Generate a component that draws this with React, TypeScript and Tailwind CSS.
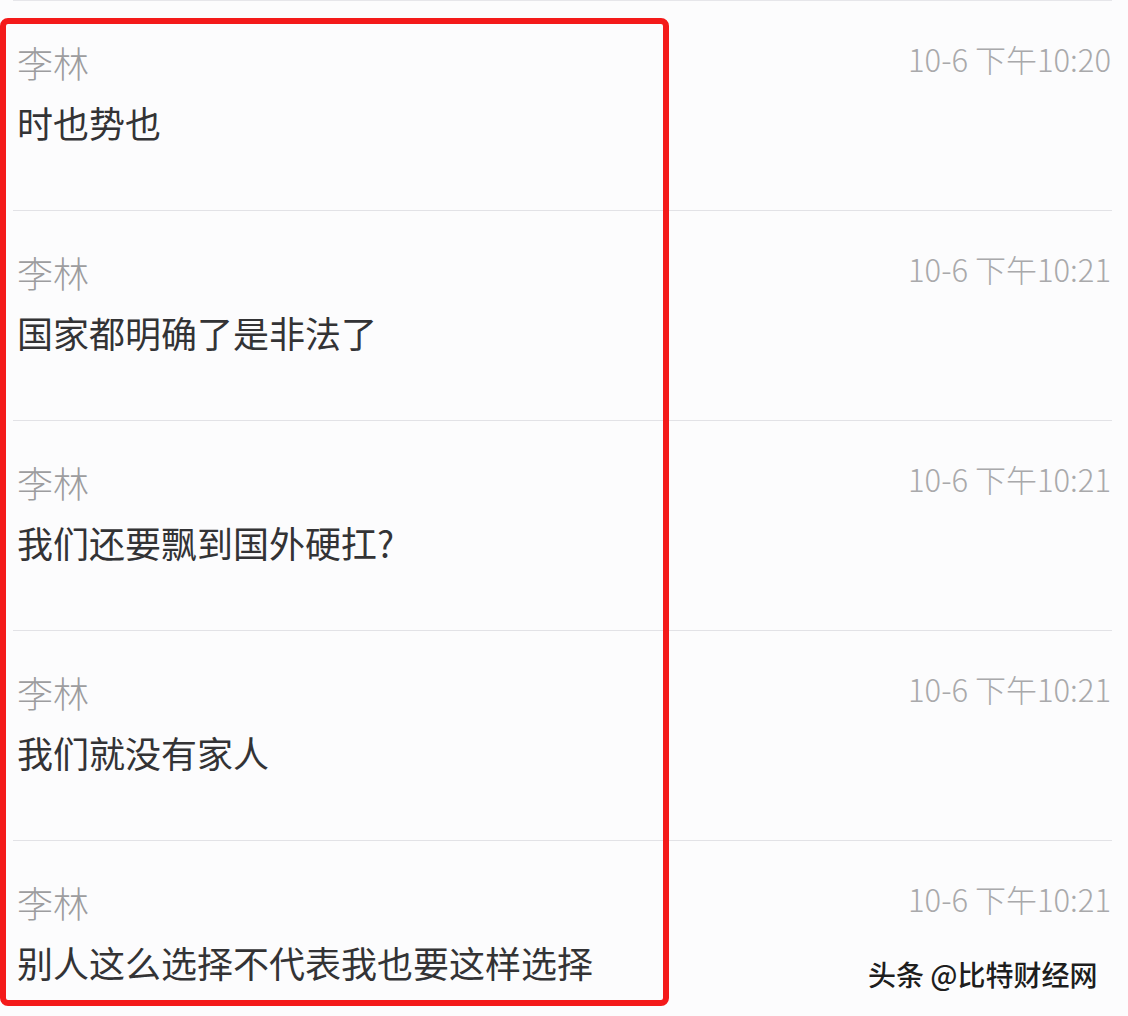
import React from "react";

const messages = [
  { name: "李林", time: "10-6 下午10:20", text: "时也势也" },
  { name: "李林", time: "10-6 下午10:21", text: "国家都明确了是非法了" },
  { name: "李林", time: "10-6 下午10:21", text: "我们还要飘到国外硬扛?" },
  { name: "李林", time: "10-6 下午10:21", text: "我们就没有家人" },
  { name: "李林", time: "10-6 下午10:21", text: "别人这么选择不代表我也要这样选择" },
];

const font = { fontFamily: '"Noto Sans CJK SC", "Noto Sans", sans-serif' };

const MessageRow = ({ name, time, text }: { name: string; time: string; text: string }) => {
  return (
    <div className="h-[210px] border-b border-[#e2e2e6] pl-[4px] pr-[1px] flex flex-col">
      <div className="flex justify-between items-start pt-[36px]">
        <span className="text-[36px] leading-[50px] text-[#9d9d9f] font-light">{name}</span>
        <span className="text-[31px] leading-[44px] text-[#a9a9ab] font-light">{time}</span>
      </div>
      <p className="text-[36px] leading-[50px] text-[#333335] mt-[10px]">{text}</p>
    </div>
  );
};

export default function App() {
  return (
    <div className="relative w-[1128px] h-[1016px] overflow-hidden bg-[#fcfcfd]" style={font}>
      <div className="pl-[13px] pr-[16px]">
        <div className="h-[1px] bg-[#e6e6ea]" />
        {messages.map((m, i) => (
          <MessageRow key={i} {...m} />
        ))}
      </div>

      {/* annotation frame */}
      <div className="absolute left-0 top-[18px] w-[669px] h-[988px] border-[6px] border-[#f41a1a] rounded-[8px]" />

      <div
        className="absolute left-[868px] top-[952px] text-[28px] leading-[44px] text-[#1e1e1e] font-medium"
        style={{ textShadow: "1px 1px 0 #ffffff, -1px -1px 0 #ffffff" }}
      >
        头条 @比特财经网
      </div>
    </div>
  );
}
